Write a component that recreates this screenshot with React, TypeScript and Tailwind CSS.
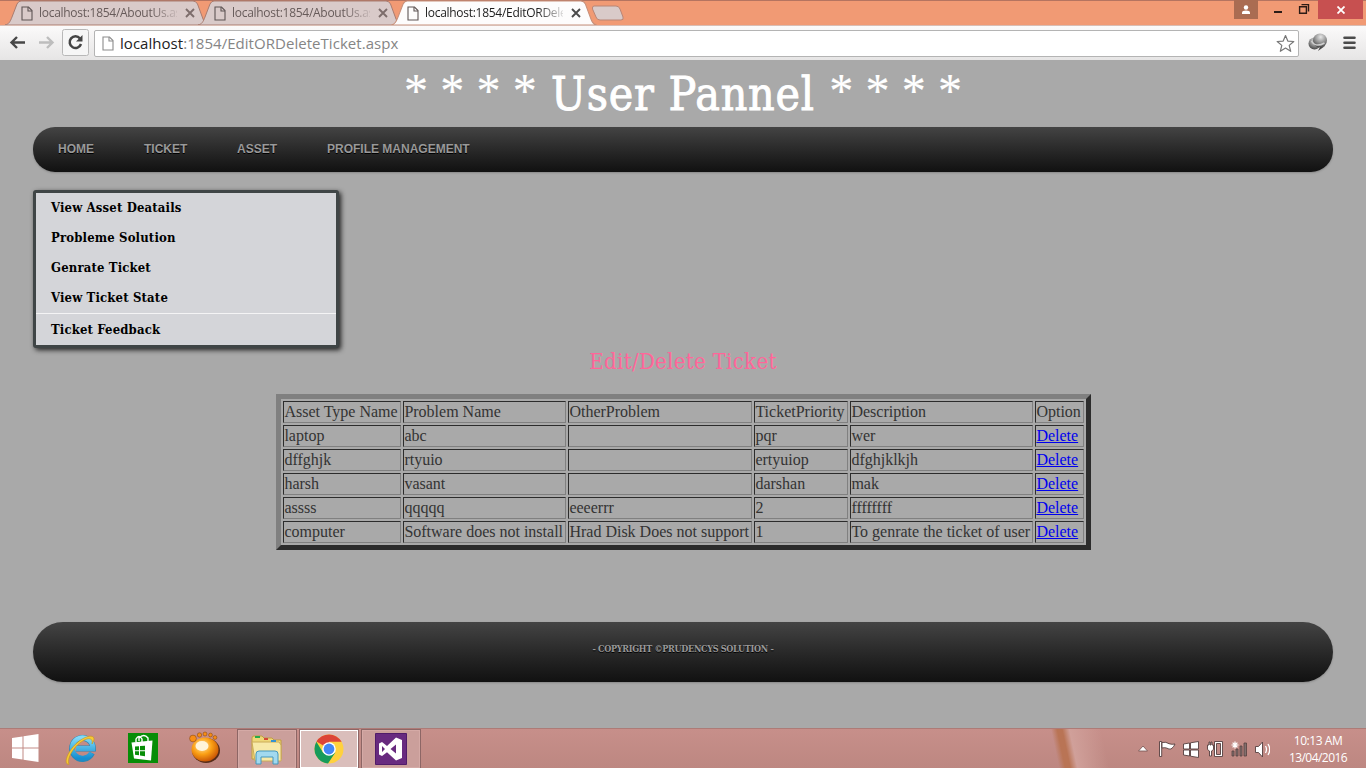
import React from "react";

const PageIcon = ({ light = false, className = "" }: { light?: boolean; className?: string }) => (
  <svg width="12" height="15" viewBox="0 0 12 15" className={"shrink-0 " + className}>
    <path d="M1 1h6.5L11 4.5V14H1z" fill={light ? "#fff" : "none"} stroke={light ? "#8c8c8c" : "#5e5554"} strokeWidth="1.1" />
    <path d="M7 1v4h4" fill="none" stroke={light ? "#8c8c8c" : "#5e5554"} strokeWidth="1.1" />
  </svg>
);

const Tab = ({ title, active = false }: { title: string; active?: boolean }) => (
  <div className={active ? "relative z-10 h-[25px] w-[206px]" : "relative h-[25px] w-[204px] -mr-[11px]"}>
    <svg className="absolute inset-0 h-[25px] w-full" viewBox="0 0 204 25" preserveAspectRatio="none">
      <path
        d="M0 25C4 24 5 22 7 17L12 4Q13.500 1 16 1H188Q191 1 192.500 4L198 19Q199.500 24 204 25z"
        fill={active ? "#fdfcfc" : "#d9cac9"}
        stroke={active ? "#c8907a" : "#a97c70"}
        strokeWidth="1"
      />
    </svg>
    <div className={"relative flex h-[25px] items-center pl-[16px] " + (active ? "text-[#1c1c1c]" : "text-[#675b5a]")}>
      <PageIcon className="mt-px" />
      <span className="ml-[6px] w-[138px] overflow-hidden whitespace-nowrap font-['Open_Sans',sans-serif] text-[12px] leading-[20px] tracking-[-0.28px] [mask-image:linear-gradient(to_right,black_112px,transparent_142px)]">
        {title}
      </span>
      <svg width="10" height="10" viewBox="0 0 10 10" className="ml-[8px]">
        <path d="M1 1l8 8M9 1L1 9" stroke={active ? "#4a4a4a" : "#7d6d6b"} strokeWidth="1.900" />
      </svg>
    </div>
  </div>
);

const Browser = () => (
  <header className="h-[60px]">
    <div className="flex h-[25px] justify-between border-t border-[#b57460] bg-[#f19a74]">
      <div className="-mt-px flex pl-[5px]">
        <Tab title="localhost:1854/AboutUs.aspx" />
        <Tab title="localhost:1854/AboutUs.aspx" />
        <Tab title="localhost:1854/EditORDeleteTicket.aspx" active />
        <svg width="34" height="16" viewBox="0 0 34 16" className="-ml-[6px] mt-[5px]">
          <path d="M3 1h22q3 0 4 3l3 8q1 3-2 3H9q-3 0-4-3L1.500 4Q1 1 3 1z" fill="#d9cac9" stroke="#b98575" />
        </svg>
      </div>
      <div className="-mt-px flex h-[19px] items-start pr-[3px]">
        <div className="flex h-[19px] w-6 items-center justify-center bg-[#aa6c52]">
          <svg width="10" height="10" viewBox="0 0 10 10">
            <circle cx="5" cy="2.500" r="2.200" fill="#fff" />
            <path d="M1 9V7.500Q1 5.500 5 5.500t4 2V9z" fill="#fff" />
          </svg>
        </div>
        <svg width="60" height="19" viewBox="0 0 60 19">
          <path d="M16 11h8v2h-8z" fill="#2c1c16" />
          <path d="M41.600 6.700h6.800v6.600h-6.800zM43.500 4.600h7v6.900" fill="none" stroke="#2c1c16" strokeWidth="1.400" />
        </svg>
        <div className="flex h-[19px] w-[45px] items-center justify-center bg-[#c75050]">
          <svg width="8" height="8" viewBox="0 0 8 8">
            <path d="M.5.5l7 7M7.500.5l-7 7" stroke="#fff" strokeWidth="1.800" />
          </svg>
        </div>
      </div>
    </div>
    <div className="flex h-[35px] items-center border-t border-[#d9bdb3] bg-linear-to-b from-[#fbfafa] to-[#e6e5e5] pr-[9px]">
      <svg width="94" height="34" viewBox="0 0 94 34" className="shrink-0">
        <path d="M25 16.500H12M17 11l-5.500 5.500L17 22" fill="none" stroke="#474747" strokeWidth="2.400" />
        <path d="M39 16.500h13M47 11l5.500 5.500L47 22" fill="none" stroke="#bdbdbd" strokeWidth="2.400" />
        <rect x="62.500" y="3.500" width="26" height="26" rx="2" fill="#f6f6f6" stroke="#b8b8b8" />
        <path d="M80 12.500A5.800 5.800 0 1 0 81 18" fill="none" stroke="#444" strokeWidth="2.500" />
        <path d="M82.500 9v6.500H76z" fill="#444" />
      </svg>
      <div className="flex h-[27px] w-[1205px] items-center rounded-[2px] border border-[#b4b4b4] bg-white pl-[7px] pr-[3px]">
        <PageIcon light />
        <span className="ml-[6px] flex-1 font-['Open_Sans',sans-serif] text-[15px] leading-[24px] tracking-[0.04px] text-[#858585]">
          <span className="text-[#222]">localhost</span>:1854/EditORDeleteTicket.aspx
        </span>
        <svg width="19" height="19" viewBox="0 0 19 19">
          <path d="M9.500 1.500l2.300 5.600 6 .4-4.600 3.900 1.500 5.900-5.200-3.200-5.200 3.200 1.500-5.900L1.200 7.500l6-.4z" fill="#fff" stroke="#777" strokeWidth="1.200" strokeLinejoin="round" />
        </svg>
      </div>
      <svg width="58" height="34" viewBox="0 0 58 34" className="shrink-0">
        <defs>
          <radialGradient id="ball" cx=".55" cy=".25" r=".8">
            <stop offset="0" stopColor="#e6e6e6" />
            <stop offset=".5" stopColor="#969696" />
            <stop offset="1" stopColor="#3c3c3c" />
          </radialGradient>
        </defs>
        <path d="M19 25l2-4 5-1z" fill="#4a4a4a" />
        <circle cx="15.500" cy="17.500" r="6" fill="url(#ball)" />
        <circle cx="21" cy="14.500" r="7" fill="url(#ball)" />
        <path d="M12.500 15q4 7 13 2" fill="none" stroke="#d0d0d0" strokeWidth="1.500" />
        <path d="M45.500 11.800h10M45.500 16.800h10M45.500 21.800h10" stroke="#4b4b4b" strokeWidth="2.600" strokeLinecap="round" />
      </svg>
    </div>
  </header>
);

const Stars = () => (
  <span className="flex text-[48px] font-normal leading-[62px] [-webkit-text-stroke:0.2px_white]">
    {[0, 1, 2, 3].map((i) => (
      <span key={i} className="w-[36.300px] text-center">*</span>
    ))}
  </span>
);

const menu = ["View Asset Deatails", "Probleme Solution", "Genrate Ticket", "View Ticket State"];

const rows = [
  ["laptop", "abc", "", "pqr", "wer"],
  ["dffghjk", "rtyuio", "", "ertyuiop", "dfghjklkjh"],
  ["harsh", "vasant", "", "darshan", "mak"],
  ["assss", "qqqqq", "eeeerrr", "2", "ffffffff"],
  ["computer", "Software does not install", "Hrad Disk Does not support", "1", "To genrate the ticket of user"],
];

const Cell = ({ children }: { children?: React.ReactNode }) => (
  <td className="h-[22px] whitespace-nowrap border border-t-[#2c2c2c] border-l-[#2c2c2c] border-r-[#808080] border-b-[#808080] py-px pl-[0.400px] pr-px">
    {children}
  </td>
);

const TicketTable = () => (
  <table className="ml-[243px] mt-[16px] w-[815px] table-fixed border-separate border-spacing-[2px] border-[5px] border-t-[#808080] border-l-[#808080] border-r-[#2c2c2c] border-b-[#2c2c2c] text-[16px] leading-[18px] text-[#333]">
    <colgroup>
      <col className="w-[118px]" />
      <col className="w-[163px]" />
      <col className="w-[184px]" />
      <col className="w-[94px]" />
      <col className="w-[183px]" />
      <col className="w-[49px]" />
    </colgroup>
    <tbody>
      <tr>
        {["Asset Type Name", "Problem Name", "OtherProblem", "TicketPriority", "Description", "Option"].map((h) => (
          <Cell key={h}>{h}</Cell>
        ))}
      </tr>
      {rows.map((r) => (
        <tr key={r[0]}>
          {r.map((c, i) => (
            <Cell key={i}>{c}</Cell>
          ))}
          <Cell>
            <a href="#" className="text-[#0000ee] underline">Delete</a>
          </Cell>
        </tr>
      ))}
    </tbody>
  </table>
);

const Page = () => (
  <main className="flex h-[668px] flex-col bg-[#a9a9a9] px-[33px] font-['Liberation_Serif',serif]">
    <h1 className="flex h-[67px] items-start justify-center text-white">
      <Stars />
      <span className="mx-[7px] w-[266px] whitespace-nowrap text-center font-['DejaVu_Serif_Condensed','DejaVu_Serif',serif] text-[46px] leading-[68px] tracking-[0.8px] [-webkit-text-stroke:0.9px_white] [font-stretch:condensed]">User Pannel</span>
      <Stars />
    </h1>
    <nav className="flex h-[45px] shrink-0 items-center gap-[50px] rounded-[22px] bg-linear-to-b from-[#444] to-[#111] pb-[2px] pl-[25px] font-['Liberation_Sans',sans-serif] text-[12px] font-bold text-[#999] shadow-[0_1px_2px_#888] [text-shadow:0_1px_0_#000]">
      <span className="w-[36px] whitespace-nowrap">HOME</span>
      <span className="w-[43px] whitespace-nowrap">TICKET</span>
      <span className="w-[40px] whitespace-nowrap">ASSET</span>
      <span className="whitespace-nowrap">PROFILE MANAGEMENT</span>
    </nav>
    <aside className="mt-[18px] h-[158px] w-[306px] shrink-0 rounded-[3px] border-[3px] border-[#3f4546] bg-[#d4d5d9] font-['DejaVu_Serif_Condensed','DejaVu_Serif',serif] text-[13px] font-bold tracking-[0.15px] text-black shadow-[2px_2px_5px_#222] [font-stretch:condensed]">
      {menu.map((m) => (
        <div key={m} className="h-[30px] pl-[15px] leading-[29px]">{m}</div>
      ))}
      <div className="h-[32px] border-t border-[#f4f4f5] pl-[15px] leading-[31px]">Ticket Feedback</div>
    </aside>
    <h2 className="h-[30px] text-center font-['DejaVu_Serif_Condensed','DejaVu_Serif',serif] text-[22px] leading-[28px] tracking-[0.3px] text-[#ff6699] [font-stretch:condensed]">Edit/Delete Ticket</h2>
    <TicketTable />
    <footer className="mt-[72px] h-[60px] shrink-0 rounded-[30px] bg-linear-to-b from-[#444] to-[#111] text-center font-['DejaVu_Serif_Condensed','DejaVu_Serif',serif] text-[9px] font-bold leading-[54px] tracking-[-0.29px] text-[#999] shadow-[0_1px_2px_#888] [text-shadow:0_1px_0_#000]">
      - COPYRIGHT ©PRUDENCYS SOLUTION -
    </footer>
  </main>
);

const TaskButton = ({ children, active = false }: { children: React.ReactNode; active?: boolean }) => (
  <div className={"flex h-[40px] w-[60px] items-center justify-center border-2 outline outline-1 -outline-offset-1 outline-[#8d6665] " + (active ? "border-white bg-[#dabebb]" : "border-[#d5aaa6] bg-[#cb9f9b]")}>
    {children}
  </div>
);

const Taskbar = () => (
  <footer className="flex h-[40px] items-stretch justify-between border-t border-[#ad7b77] bg-[linear-gradient(78deg,transparent_0,transparent_1036px,#b97455_1042px,#b97455_1047px,#d0a09a_1054px,transparent_1085px),linear-gradient(to_bottom,#c78f8a,#bd8781)]">
    <div className="flex">
      <svg width="237" height="39" viewBox="0 0 237 39">
        <defs>
          <radialGradient id="orange" cx=".4" cy=".35" r=".7">
            <stop offset="0" stopColor="#ffe7ac" />
            <stop offset=".5" stopColor="#fba014" />
            <stop offset="1" stopColor="#c34d04" />
          </radialGradient>
          <linearGradient id="ie" x2="0" y2="1">
            <stop offset="0" stopColor="#82daf8" />
            <stop offset="1" stopColor="#148fd2" />
          </linearGradient>
        </defs>
        <path d="M12 9l10.500-1.500v11H12zM23.500 7.300L38.500 5v13.500h-15zM12 19.500h10.500v11L12 29zM23.500 19.500h15V33l-15-2.300z" fill="#fff" />
        <path d="M92 24A10.500 10.500 0 1 1 93 19.500H76" fill="none" stroke="#2788b8" strokeWidth="5.800" />
        <path d="M91.500 24A10.300 10.300 0 1 1 92.800 19.500H76" fill="none" stroke="url(#ie)" strokeWidth="4.800" />
        <path d="M69 35.500C62 35 69 20 78 13c7-6 16-8 16-3 0 2-1 3-2 5 1-4-1-6-5-5C77 13 66 28 69 35.500z" fill="#f6c936" stroke="#c99516" strokeWidth=".6" />
        <path d="M128 4h30v30h-30z" fill="#078d07" />
        <path d="M131.500 13.500l21-2-1.500 20-17-2z" fill="#fff" />
        <path d="M136 13V10q3-5 6 0v3M139 12V9q5-5 9 0v3" fill="none" stroke="#fff" strokeWidth="1.400" />
        <path d="M135 17.500l4-.3v4h-4zM140 17.100l5-.4v4.500h-5zM135 22.200h4v4l-4-.5zM140 22.200h5v5l-5-.8z" fill="#078d07" />
        <ellipse cx="206" cy="21.500" rx="14" ry="12.500" fill="#562c18" />
        <ellipse cx="205" cy="20.500" rx="13.500" ry="12" fill="url(#orange)" />
        <ellipse cx="202" cy="17" rx="6.500" ry="5" fill="#fff4da" />
        <g fill="#f78d14" stroke="#8a4a1c" strokeWidth=".6">
          <circle cx="193" cy="9.500" r="3.400" />
          <circle cx="199.500" cy="6" r="2.200" />
          <circle cx="205" cy="5" r="2" />
          <circle cx="210.500" cy="6" r="1.900" />
          <circle cx="215" cy="8.500" r="1.900" />
        </g>
      </svg>
      <div className="flex gap-[2px]">
        <TaskButton>
          <svg width="34" height="32" viewBox="0 0 34 32">
            <path d="M2 5q0-2 2-2h8l2 2h8l2 2h7v19H2z" fill="#eed778" stroke="#bf9d43" />
            <path d="M2 9h27l2 3v16H5z" fill="#f7e9a8" stroke="#cbac58" />
            <path d="M5 4h5" stroke="#27aa4b" strokeWidth="2" />
            <path d="M14 6h4" stroke="#d54837" strokeWidth="2" />
            <path d="M21 8h5" stroke="#3492d0" strokeWidth="2" />
            <path d="M6 31V21q0-3 3-3h16q3 0 3 3v10h-5v-7H11v7z" fill="#a2d9ef" stroke="#4597bd" />
          </svg>
        </TaskButton>
        <TaskButton active>
          <svg width="30" height="30" viewBox="0 0 30 30">
            <circle cx="15" cy="15" r="14.500" fill="#ffd13e" />
            <path d="M15 15L2.500 7.600A14.500 14.500 0 0 1 27.600 7.800H15z" fill="#dc4437" />
            <path d="M2.400 7.800A14.500 14.500 0 0 0 14 29.500l7.300-11L9 18.500z" fill="#169b5b" />
            <circle cx="15" cy="15" r="6.800" fill="#fff" />
            <circle cx="15" cy="15" r="5.400" fill="#4486f4" />
          </svg>
        </TaskButton>
        <TaskButton>
          <svg width="32" height="32" viewBox="0 0 32 32">
            <path d="M.5.5h31v31H.5z" fill="#682a7f" stroke="#501b69" />
            <path d="M21 4.500l6 2.500v18l-6 2.500-9-8.300L7 23l-3-1.500v-11L7 9l5 4zM7 13v6l3-3zM21 11.500L15.500 16l5.500 4.500z" fill="#fff" fillRule="evenodd" />
          </svg>
        </TaskButton>
      </div>
    </div>
    <div className="flex text-white">
      <svg width="138" height="39" viewBox="0 0 138 39">
        <path d="M6.500 22l4.500-5 4.500 5z" fill="#fff" stroke="#72504e" strokeWidth=".8" />
        <g fill="#fff" stroke="#55403f" strokeWidth=".9">
          <path d="M27.500 12.500h2.200V27.500h-2.200z" />
          <path d="M30 13.500q4-1 7 1.200 3 1 6 .3-1 3-4 5-2 .5-4-.8-2-1-5-.2z" />
          <path d="M51.500 15l6-1v6h-6zM58.500 13.800l8-1.300V20h-8zM51.500 21h6v6l-6-1zM58.500 21h8v7.500l-8-1.300z" />
          <path d="M82.500 12.500h8v15h-8zM84.500 14.500h4v11h-4z" fillRule="evenodd" />
          <path d="M77 13v3h-1.500v4.500l2 1.500v5h2v-5l2-1.500V16H80v-3h-1v3h-1v-3z" />
          <path d="M123.500 17.500h3l4-4.500v15l-4-4.500h-3z" />
        </g>
        <path d="M100 22h2v5h-2zM104 20h2v7h-2zM108 17h2v10h-2zM112 14h2.500v13H112z" fill="#82706e" stroke="#55403f" strokeWidth=".8" />
        <path d="M103 12.500v7M99.500 16h7M100.600 13.600l4.800 4.800M105.400 13.600l-4.800 4.800" stroke="#fff" strokeWidth="1.200" />
        <path d="M133.500 17q2 3 0 7M136 15q3.500 5.500 0 11" fill="none" stroke="#fff" strokeWidth="1.300" />
      </svg>
      <div className="flex w-[96px] flex-col pt-[3px] text-center font-['Open_Sans',sans-serif] text-[12px] leading-[17px]">
        <span className="tracking-[-0.45px]">10:13 AM</span>
        <span className="tracking-[-0.55px]">13/04/2016</span>
      </div>
    </div>
  </footer>
);

export default function App() {
  return (
    <div className="h-[768px] w-[1366px] overflow-hidden">
      <Browser />
      <Page />
      <Taskbar />
    </div>
  );
}
